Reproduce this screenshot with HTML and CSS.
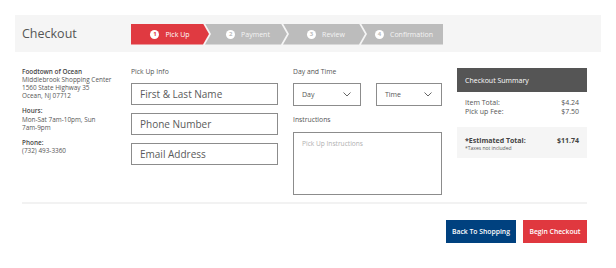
FILE: index.html
```html
<!DOCTYPE html>
<html lang="en">
<head>
<meta charset="utf-8">
<title>Checkout</title>
<link rel="stylesheet" href="styles.css">
</head>
<body>
<div class="page">
  <header class="bar">
    <h1 class="bar-title">Checkout</h1>
    <ol class="steps">
      <li class="step step-active"><span class="step-num">1</span>Pick Up</li>
      <li class="step"><span class="step-num">2</span>Payment</li>
      <li class="step"><span class="step-num">3</span>Review</li>
      <li class="step step-last"><span class="step-num">4</span>Confirmation</li>
    </ol>
  </header>

  <main class="content">
    <section class="store">
      <p class="store-block"><strong>Foodtown of Ocean</strong><br>Middlebrook Shopping Center<br>1560 State Highway 35<br>Ocean, NJ 07712</p>
      <p class="store-block"><strong>Hours:</strong><br>Mon-Sat 7am-10pm, Sun<br>7am-9pm</p>
      <p class="store-block"><strong>Phone:</strong><br>(732) 493-3360</p>
    </section>

    <section class="col">
      <div class="label">Pick Up Info</div>
      <div class="fields">
        <input class="field" type="text" placeholder="First &amp; Last Name">
        <input class="field" type="text" placeholder="Phone Number">
        <input class="field" type="text" placeholder="Email Address">
      </div>
    </section>

    <section class="col">
      <div class="label">Day and Time</div>
      <div class="selects">
        <div class="select"><span>Day</span><svg class="chev" width="8" height="5" viewBox="0 0 8 5"><polyline points="0.5,0.5 4,4 7.5,0.5" fill="none" stroke="#666" stroke-width="1"/></svg></div>
        <div class="select"><span>Time</span><svg class="chev" width="8" height="5" viewBox="0 0 8 5"><polyline points="0.5,0.5 4,4 7.5,0.5" fill="none" stroke="#666" stroke-width="1"/></svg></div>
      </div>
      <div class="label label-instr">Instructions</div>
      <textarea class="instr" placeholder="Pick Up Instructions"></textarea>
    </section>

    <aside class="summary">
      <div class="summary-head">Checkout Summary</div>
      <div class="summary-body">
        <div class="row"><span>Item Total:</span><span>$4.24</span></div>
        <div class="row"><span>Pick up Fee:</span><span>$7.50</span></div>
      </div>
      <div class="summary-total">
        <div class="row row-total"><span>*Estimated Total:</span><span>$11.74</span></div>
        <div class="note">*Taxes not included</div>
      </div>
    </aside>
  </main>

  <hr class="divider">

  <div class="actions">
    <button class="btn btn-blue" type="button">Back To Shopping</button>
    <button class="btn btn-red" type="button">Begin Checkout</button>
  </div>
</div>
</body>
</html>
```
FILE: styles.css
```css
* { box-sizing: border-box; }
html, body { margin: 0; padding: 0; background: #fff; }
body { font-family: "Open Sans", "DejaVu Sans", sans-serif; color: #555; }

.page { padding: 15px 15px 0 15px; }

.bar {
  display: flex;
  align-items: center;
  height: 37px;
  background: #f5f5f5;
  padding-left: 7px;
}
.bar-title {
  margin: 0;
  width: 109px;
  font-size: 12.5px;
  font-weight: 400;
  color: #555;
}
.steps {
  display: flex;
  list-style: none;
  margin: 0;
  padding: 0;
  height: 21px;
  margin-top: 1px;
}
.step {
  display: flex;
  align-items: center;
  justify-content: center;
  gap: 6px;
  width: 82px;
  height: 21px;
  margin-left: -4px;
  background: #bcbcbc;
  color: #f4f4f4;
  font-size: 7px;
  padding-left: 4px;
  clip-path: polygon(0 0, calc(100% - 6px) 0, 100% 50%, calc(100% - 6px) 100%, 0 100%, 6px 50%);
}
.step-active {
  width: 78px;
  margin-left: 0;
  padding-left: 0;
  background: #e03a41;
  color: #fff;
  clip-path: polygon(0 0, calc(100% - 6px) 0, 100% 50%, calc(100% - 6px) 100%, 0 100%);
}
.step-last {
  width: 82px;
  clip-path: polygon(0 0, 100% 0, 100% 100%, 0 100%, 6px 50%);
}
.step-num {
  display: inline-flex;
  align-items: center;
  justify-content: center;
  width: 9px;
  height: 9px;
  border-radius: 50%;
  background: #fff;
  color: #bcbcbc;
  font-size: 6px;
  font-weight: 700;
  line-height: 1;
}
.step-active .step-num { color: #e03a41; }

.content {
  display: grid;
  grid-template-columns: 94px 147px 149px 130px;
  column-gap: 15px;
  margin: 16px 14px 0 7px;
  align-items: start;
}

.store { font-size: 6.4px; line-height: 8.2px; color: #555; margin-top: -0.5px; }
.store-block { margin: 0 0 7px 0; }
.store-block strong { font-weight: 600; color: #444; }

.label { font-size: 6.8px; line-height: 8px; color: #555; }

.fields { display: flex; flex-direction: column; gap: 8px; margin-top: 7px; }
.field {
  display: block;
  width: 147px;
  height: 22px;
  border: 1px solid #8c8c8c;
  padding: 0 8px;
  font-family: "Open Sans", sans-serif;
  font-size: 10px;
  color: #555;
  background: #fff;
  outline: none;
}
.field::placeholder { color: #5a5a5a; }

.selects { display: flex; justify-content: space-between; margin-top: 7px; }
.select {
  display: flex;
  align-items: center;
  justify-content: space-between;
  width: 68px;
  height: 23px;
  border: 1px solid #8c8c8c;
  padding: 0 9px 0 8px;
  font-size: 7px;
  color: #555;
}
.select + .select { width: 66px; }

.label-instr { margin-top: 10px; }
.instr {
  display: block;
  width: 149px;
  height: 63px;
  margin-top: 8px;
  border: 1px solid #8c8c8c;
  padding: 6px 8px;
  resize: none;
  font-family: "Open Sans", sans-serif;
  font-size: 6.6px;
  color: #555;
  outline: none;
}
.instr::placeholder { color: #b0b0b0; }

.summary { width: 130px; }
.summary-head {
  height: 24px;
  background: #555;
  color: #fff;
  font-size: 7px;
  display: flex;
  align-items: center;
  padding: 0 8px;
}
.summary-body { padding: 6px 8px 11px; font-size: 7px; line-height: 9px; color: #555; }
.row { display: flex; justify-content: space-between; }
.summary-total { background: #f5f5f5; padding: 9px 8px 6px; }
.row-total { font-size: 7px; line-height: 9px; font-weight: 700; color: #444; }
.note { font-size: 5px; line-height: 7px; color: #555; }

.divider {
  border: 0;
  height: 2px;
  background: #f2f2f2;
  margin: 7px 14px 0 7px;
}

.actions {
  display: flex;
  justify-content: flex-end;
  gap: 7px;
  margin: 16px 14px 0 0;
}
.btn {
  height: 23px;
  border: 0;
  padding: 0;
  font-family: "Open Sans", sans-serif;
  font-size: 6.8px;
  font-weight: 600;
  color: #fff;
  cursor: pointer;
}
.btn-blue { width: 70px; background: #00417f; }
.btn-red { width: 64px; background: #e0383f; }
```
